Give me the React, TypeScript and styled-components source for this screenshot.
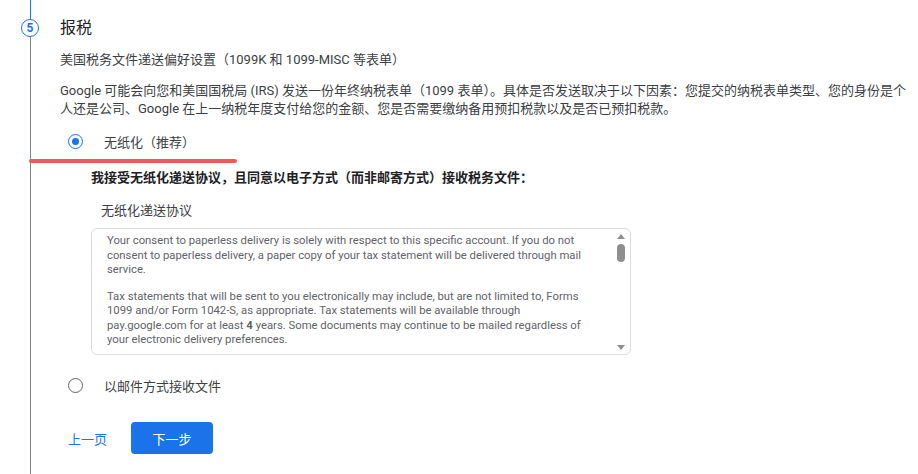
import styled, { createGlobalStyle } from "styled-components";

const GlobalStyle = createGlobalStyle`
  html, body {
    margin: 0;
    padding: 0;
    background: #ffffff;
  }
  body {
    font-family: Roboto, "Noto Sans CJK SC", sans-serif;
    color: #3c4043;
  }
  * {
    box-sizing: border-box;
  }
`;

const Step = styled.div`
  position: relative;
  display: flex;
  min-height: 474px;
  padding-right: 4px;
`;

const Rail = styled.div`
  width: 60px;
  flex-shrink: 0;
  display: flex;
  flex-direction: column;
  align-items: center;
  padding-right: 18px;
  padding-left: 18px;
`;

const RailLine = styled.div<{ $active?: boolean }>`
  width: 1px;
  background: ${(p) => (p.$active ? "#1a73e8" : "#80868b")};
  flex: ${(p) => (p.$active ? "0 0 19px" : "1 1 auto")};
`;

const StepBadge = styled.div`
  width: 18px;
  height: 18px;
  flex-shrink: 0;
  border: 1.6px solid #1a73e8;
  border-radius: 50%;
  color: #1a73e8;
  font-size: 12px;
  font-weight: 700;
  display: flex;
  align-items: center;
  justify-content: center;
  line-height: 1;
`;

const Content = styled.div`
  flex: 1;
  padding-top: 16px;
`;

const Title = styled.h2`
  margin: 0;
  font-size: 16px;
  font-weight: 400;
  line-height: 24px;
  color: #202124;
`;

const Subtitle = styled.div`
  margin-top: 10px;
  font-size: 13px;
  line-height: 20px;
  color: #3c4043;
`;

const Paragraph = styled.p`
  margin: 12px 0 0;
  font-size: 13px;
  line-height: 18px;
  color: #3c4043;
`;

const OptionRow = styled.label<{ $gap: number }>`
  display: flex;
  align-items: center;
  height: 30px;
  margin-top: ${(p) => p.$gap}px;
  cursor: pointer;
`;

const RadioWrap = styled.span`
  width: 30px;
  height: 30px;
  display: flex;
  align-items: center;
  justify-content: center;
`;

const Radio = styled.span<{ $checked?: boolean }>`
  width: 15px;
  height: 15px;
  border-radius: 50%;
  border: 1.5px solid ${(p) => (p.$checked ? "#1a73e8" : "#5f6368")};
  display: flex;
  align-items: center;
  justify-content: center;

  &::after {
    content: "";
    width: 7px;
    height: 7px;
    border-radius: 50%;
    background: ${(p) => (p.$checked ? "#1a73e8" : "transparent")};
  }
`;

const OptionText = styled.span`
  margin-left: 14px;
  font-size: 13px;
  color: #3c4043;
`;

const Highlight = styled.div`
  position: absolute;
  left: 29px;
  top: 159px;
  width: 208px;
  height: 4px;
  border-radius: 2px;
  background: #f25858;
`;

const Agreement = styled.div`
  padding-left: 31px;
  margin-top: 13px;
`;

const AgreementLead = styled.div`
  font-size: 13px;
  font-weight: 700;
  line-height: 18px;
  color: #202124;
`;

const AgreementLabel = styled.div`
  margin: 15px 0 0 10px;
  font-size: 13px;
  line-height: 18px;
  color: #3c4043;
`;

const TermsBox = styled.div`
  margin-top: 8px;
  width: 540px;
  height: 127px;
  border: 1px solid #dadce0;
  border-radius: 6px;
  display: flex;
  overflow: hidden;
`;

const TermsText = styled.div`
  flex: 1;
  padding: 5px 20px 0 15px;
  overflow: hidden;
  font-size: 11.3px;
  line-height: 14.5px;
  color: #5f6368;

  p {
    margin: 0 0 12px;
  }
`;

const Scrollbar = styled.div`
  width: 14px;
  margin-right: 2px;
  display: flex;
  flex-direction: column;
  align-items: center;
  padding: 5px 0 4px;
`;

const Arrow = styled.span<{ $down?: boolean }>`
  width: 0;
  height: 0;
  border-left: 4px solid transparent;
  border-right: 4px solid transparent;
  ${(p) =>
    p.$down
      ? "border-top: 5px solid #8f8f8f;"
      : "border-bottom: 5px solid #8f8f8f;"}
`;

const Thumb = styled.span`
  width: 8px;
  height: 18px;
  margin-top: 5px;
  border-radius: 4px;
  background: #8f8f8f;
`;

const Track = styled.span`
  flex: 1;
`;

const Actions = styled.div`
  display: flex;
  align-items: center;
  gap: 16px;
  margin-top: 22px;
`;

const TextButton = styled.button`
  border: none;
  background: none;
  padding: 0 8px;
  height: 32px;
  font-family: inherit;
  font-size: 13px;
  color: #1a73e8;
  cursor: pointer;
`;

const PrimaryButton = styled.button`
  border: none;
  border-radius: 4px;
  width: 82px;
  height: 32px;
  background: #1a73e8;
  color: #ffffff;
  font-family: inherit;
  font-size: 13px;
  cursor: pointer;
`;

export default function App() {
  return (
    <>
      <GlobalStyle />
      <Step>
        <Rail>
          <RailLine $active />
          <StepBadge>5</StepBadge>
          <RailLine />
        </Rail>
        <Content>
          <Title>报税</Title>
          <Subtitle>美国税务文件递送偏好设置（1099K 和 1099-MISC 等表单）</Subtitle>
          <Paragraph>
            Google 可能会向您和美国国税局 (IRS) 发送一份年终纳税表单（1099
            表单）。具体是否发送取决于以下因素：您提交的纳税表单类型、您的身份是个人还是公司、Google
            在上一纳税年度支付给您的金额、您是否需要缴纳备用预扣税款以及是否已预扣税款。
          </Paragraph>

          <OptionRow $gap={8}>
            <RadioWrap>
              <Radio $checked />
            </RadioWrap>
            <OptionText>无纸化（推荐）</OptionText>
          </OptionRow>

          <Agreement>
            <AgreementLead>
              我接受无纸化递送协议，且同意以电子方式（而非邮寄方式）接收税务文件：
            </AgreementLead>
            <AgreementLabel>无纸化递送协议</AgreementLabel>
            <TermsBox>
              <TermsText>
                <p>
                  Your consent to paperless delivery is solely with respect to this specific
                  account. If you do not consent to paperless delivery, a paper copy of your tax
                  statement will be delivered through mail service.
                </p>
                <p>
                  Tax statements that will be sent to you electronically may include, but are not
                  limited to, Forms 1099 and/or Form 1042-S, as appropriate. Tax statements will be
                  available through pay.google.com for at least <b>4</b> years. Some documents may
                  continue to be mailed regardless of your electronic delivery preferences.
                </p>
              </TermsText>
              <Scrollbar>
                <Arrow />
                <Thumb />
                <Track />
                <Arrow $down />
              </Scrollbar>
            </TermsBox>
          </Agreement>

          <OptionRow $gap={15}>
            <RadioWrap>
              <Radio />
            </RadioWrap>
            <OptionText>以邮件方式接收文件</OptionText>
          </OptionRow>

          <Actions>
            <TextButton>上一页</TextButton>
            <PrimaryButton>下一步</PrimaryButton>
          </Actions>
        </Content>
        <Highlight />
      </Step>
    </>
  );
}
